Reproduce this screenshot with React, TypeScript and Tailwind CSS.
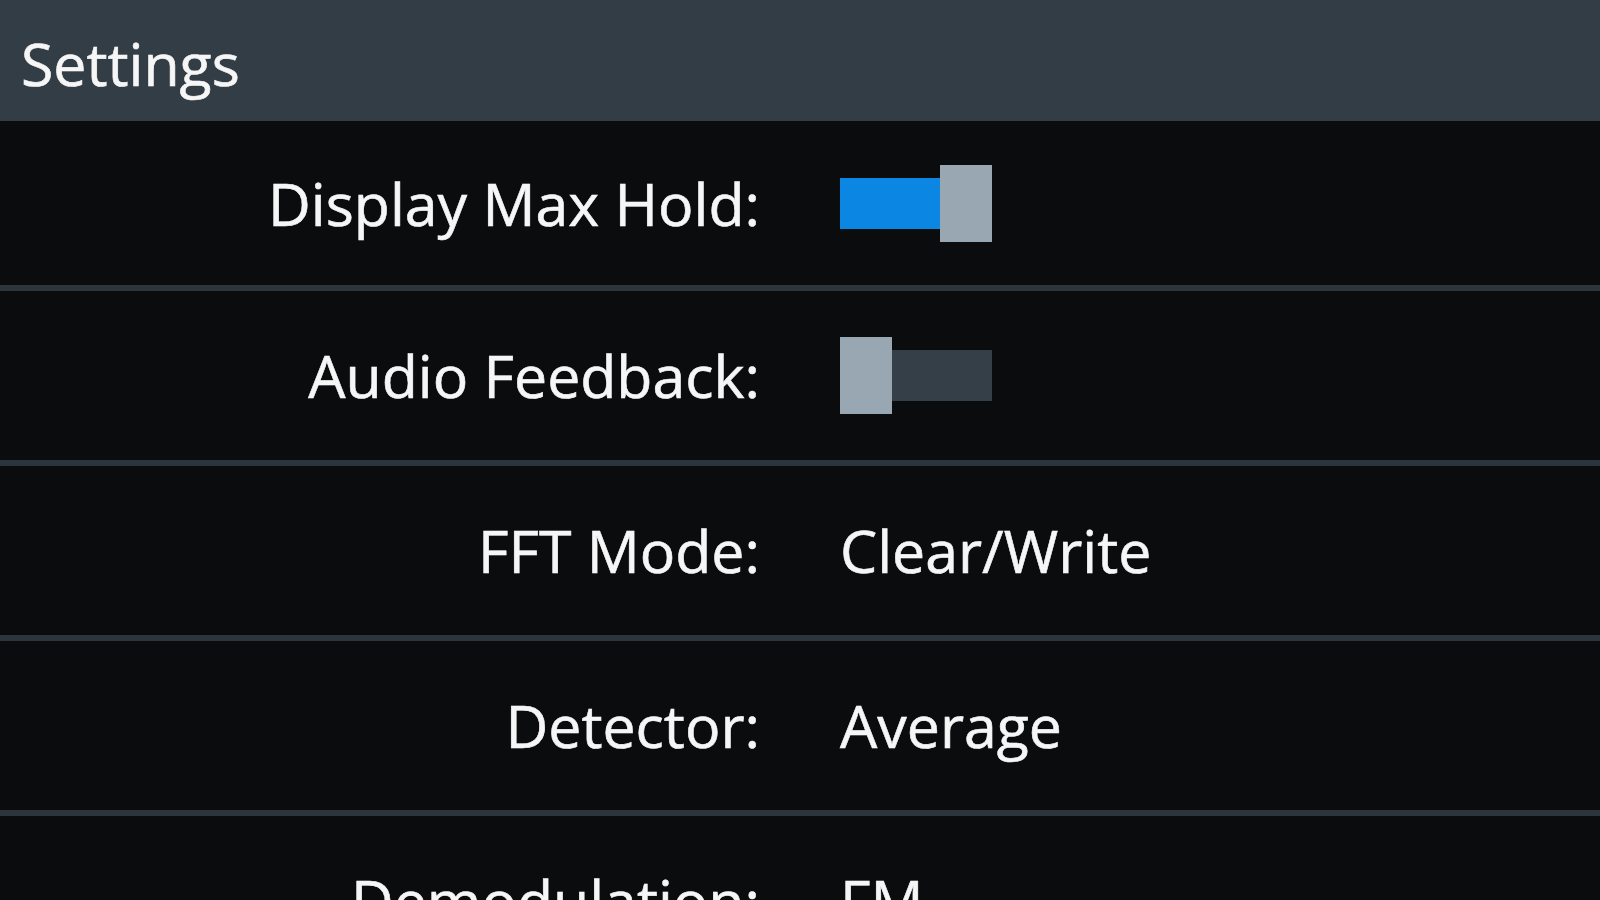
import React from "react";

function Toggle({ on }: { on: boolean }) {
  return (
    <div className="relative flex h-[77px] w-[152px] items-center">
      {on ? (
        <>
          <div className="h-[51px] w-[100px] bg-[#0b86e3]" />
          <div className="h-[77px] w-[52px] bg-[#98a7b2]" />
        </>
      ) : (
        <>
          <div className="h-[77px] w-[52px] bg-[#98a7b2]" />
          <div className="h-[51px] w-[100px] bg-[#353f47]" />
        </>
      )}
    </div>
  );
}

function Row({
  label,
  children,
  first,
}: {
  label: string;
  children: React.ReactNode;
  first?: boolean;
}) {
  return (
    <div
      className={`flex shrink-0 items-center border-b-[6px] border-[#2b353b] ${
        first ? "h-[170px]" : "h-[175px]"
      }`}
    >
      <div className="w-[760px] shrink-0 text-right">{label}</div>
      <div className="ml-[80px] flex items-center">{children}</div>
    </div>
  );
}

export default function App() {
  return (
    <div
      className="flex h-[900px] w-[1600px] flex-col overflow-hidden bg-[#0b0c0e] text-[59px] leading-none text-[#f6f6f6] [-webkit-text-stroke:0.6px_#f6f6f6]"
      style={{ fontFamily: '"Open Sans", "Noto Sans", sans-serif' }}
    >
      <div className="flex h-[121px] shrink-0 items-center bg-[#333d46] pl-[21px] pt-[6px]">
        <span className="text-[59px]">Settings</span>
      </div>
      <Row label="Display Max Hold:" first>
        <Toggle on />
      </Row>
      <Row label="Audio Feedback:">
        <Toggle on={false} />
      </Row>
      <Row label="FFT Mode:">
        <span>Clear/Write</span>
      </Row>
      <Row label="Detector:">
        <span>Average</span>
      </Row>
      <Row label="Demodulation:">
        <span>FM</span>
      </Row>
    </div>
  );
}
